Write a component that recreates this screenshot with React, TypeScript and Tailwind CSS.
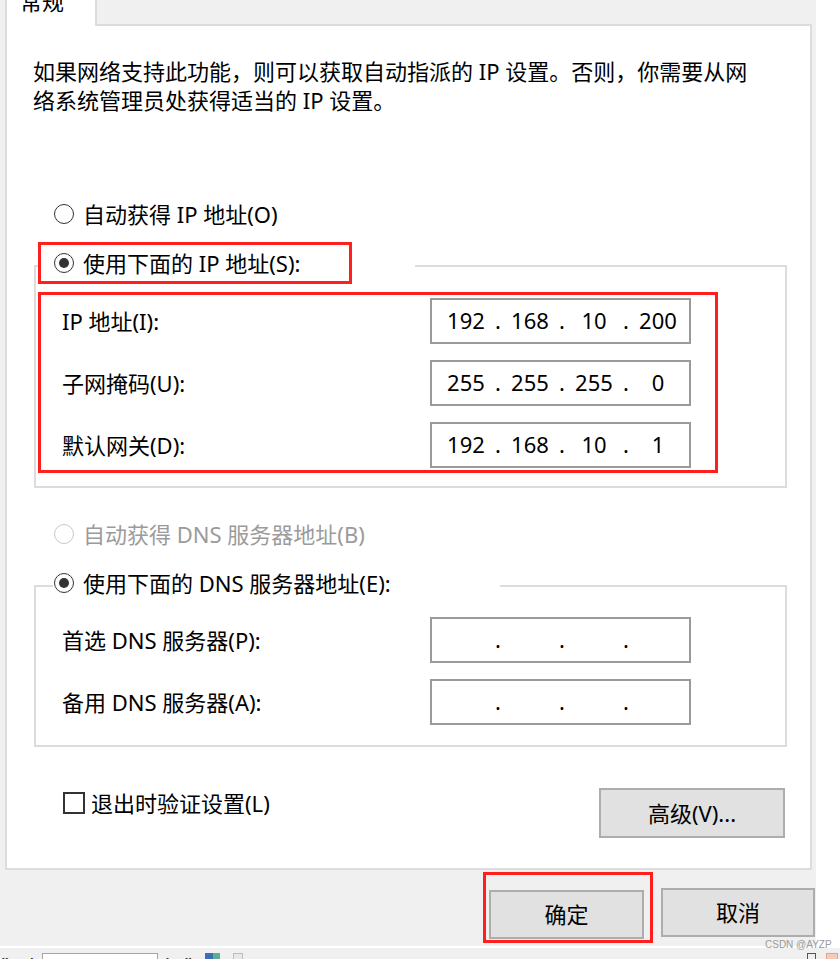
import { Fragment } from "react";

function Radio({ checked = false, disabled = false }: { checked?: boolean; disabled?: boolean }) {
  return (
    <span
      className={
        disabled
          ? "flex h-[20px] w-[20px] shrink-0 items-center justify-center rounded-full border-[1.5px] border-[#c8c8c8] bg-white"
          : "flex h-[20px] w-[20px] shrink-0 items-center justify-center rounded-full border-[1.5px] border-[#333333] bg-white"
      }
    >
      {checked && <span className="h-[10px] w-[10px] rounded-full bg-[#333333]" />}
    </span>
  );
}

function IpBox({ parts }: { parts: string[] }) {
  return (
    <div className="flex h-[46px] w-[261px] shrink-0 items-center border-2 border-[#9a9a9a] bg-white pb-[3px] pl-[6px] text-[22px] leading-none text-black">
      {parts.map((p, i) => (
        <Fragment key={i}>
          {i > 0 && <span className="w-[8px] text-center">.</span>}
          <span className="w-[56px] text-center">{p}</span>
        </Fragment>
      ))}
    </div>
  );
}

function Row({ label, parts }: { label: string; parts: string[] }) {
  return (
    <div className="flex h-[46px] items-center">
      <span className="w-[368px] shrink-0">{label}</span>
      <IpBox parts={parts} />
    </div>
  );
}

function Button({ label, className }: { label: string; className: string }) {
  return (
    <div
      className={
        "flex items-center justify-center border-2 border-[#adadad] bg-[#e1e1e1] text-[22px] text-black " + className
      }
    >
      {label}
    </div>
  );
}

export default function App() {
  return (
    <div className="relative h-[959px] w-[840px] overflow-hidden bg-white font-['Noto_Sans','Noto_Sans_CJK_SC',sans-serif] text-[22px] leading-normal text-black">
      <div className="flex h-[946px] w-[816px] flex-col bg-[#f0f0f0]">
        {/* tab row */}
        <div className="ml-[5px] flex h-[26px] w-[807px] shrink-0">
          <div className="w-[92px] overflow-hidden border-x-2 border-[#dcdcdc] bg-white pl-[13px]">
            <div className="-mt-[10px] leading-[22px]">常规</div>
          </div>
          <div className="flex-1 border-b-2 border-[#dcdcdc]" />
        </div>

        {/* panel */}
        <div className="ml-[5px] flex h-[844px] w-[807px] shrink-0 flex-col border-x-2 border-b-2 border-[#dcdcdc] bg-white">
          <p className="pl-[26px] pt-[31px] leading-[29px]">
            如果网络支持此功能，则可以获取自动指派的 IP 设置。否则，你需要从网
            <br />
            络系统管理员处获得适当的 IP 设置。
          </p>

          <div className="ml-[27px] w-[753px]">
            <div className="mt-[84px] flex h-[30px] items-center gap-[9px] pl-[20px]">
              <Radio />
              <span>自动获得 IP 地址(O)</span>
            </div>

            <fieldset className="mt-[13px] border-2 border-[#dcdcdc] pb-[13px]">
              <legend className="ml-[2px] h-[48px] w-[377px]">
                <div className="flex h-[42px] w-[314px] items-center gap-[9px] border-[3px] border-[#ff1f1f] pl-[13px]">
                  <Radio checked />
                  <span>使用下面的 IP 地址(S):</span>
                </div>
              </legend>
              <div className="ml-[2px] mt-[2px] flex h-[181px] w-[680px] flex-col gap-[16px] border-[3px] border-[#ff1f1f] pl-[21px] pt-[3px]">
                <Row label="IP 地址(I):" parts={["192", "168", "10", "200"]} />
                <Row label="子网掩码(U):" parts={["255", "255", "255", "0"]} />
                <Row label="默认网关(D):" parts={["192", "168", "10", "1"]} />
              </div>
            </fieldset>

            <div className="mt-[31px] flex h-[30px] items-center gap-[9px] pl-[20px] text-[#9b9b9b]">
              <Radio disabled />
              <span>自动获得 DNS 服务器地址(B)</span>
            </div>

            <fieldset className="mt-[19px] border-2 border-[#dcdcdc] pb-[20px]">
              <legend className="ml-[17px] h-[36px] w-[447px]">
                <div className="flex h-[30px] items-center gap-[9px] pl-[1px]">
                  <Radio checked />
                  <span>使用下面的 DNS 服务器地址(E):</span>
                </div>
              </legend>
              <div className="mt-[13px] flex flex-col gap-[16px] pl-[26px]">
                <Row label="首选 DNS 服务器(P):" parts={["", "", "", ""]} />
                <Row label="备用 DNS 服务器(A):" parts={["", "", "", ""]} />
              </div>
            </fieldset>

            <div className="mt-[41px] flex items-start justify-between pr-[2px]">
              <div className="ml-[29px] flex h-[30px] items-center gap-[6px]">
                <span className="h-[22px] w-[22px] border-2 border-[#333333] bg-white" />
                <span>退出时验证设置(L)</span>
              </div>
              <Button label="高级(V)..." className="h-[50px] w-[186px]" />
            </div>
          </div>
        </div>

        {/* bottom buttons */}
        <div className="flex items-start justify-end gap-[8px] pr-[1px]">
          <div className="mt-[2px] h-[71px] w-[170px] border-[3px] border-[#ff1f1f] pl-[3px] pt-[15px]">
            <Button label="确定" className="h-[49px] w-[155px]" />
          </div>
          <div className="mt-[18px]">
            <Button label="取消" className="h-[49px] w-[154px]" />
          </div>
        </div>
      </div>

      {/* lower strip of another window */}
      <div className="flex h-[13px] w-[840px] items-start border-t-2 border-white bg-[#f0f0f0] text-[14px] font-bold leading-none text-[#333]">
        <span className="ml-[0px] mt-[5px]">«</span>
        <span className="ml-[20px] mt-[5px]">‹</span>
        <span className="ml-[8px] mt-[5px] h-[10px] w-[116px] border border-[#a5a5a5] bg-white" />
        <span className="ml-[8px] mt-[5px]">›</span>
        <span className="ml-[14px] mt-[5px]">»</span>
        <span className="ml-[12px] mt-[5px] flex h-[8px] w-[16px]">
          <span className="h-[8px] w-[8px] bg-[#3d6fb8]" />
          <span className="h-[8px] w-[7px] bg-[#5fae8c]" />
        </span>
        <span className="ml-[12px] mt-[5px] h-[8px] w-[10px] border border-[#bdbdbd] bg-[#e8e8e8]" />
        <span className="ml-auto mt-[5px] h-[8px] w-[9px] border border-[#555]" />
        <span className="ml-[10px] mr-[2px] mt-[5px] h-[8px] w-[12px] border border-[#e8a08a] bg-[#f6c9b8]" />
      </div>

      {/* watermark */}
      <div className="absolute left-[765px] top-[938px] whitespace-nowrap font-['Liberation_Sans',sans-serif] text-[10px] leading-[14px] text-[#9a9a9a]">
        CSDN @AYZP
      </div>
    </div>
  );
}
